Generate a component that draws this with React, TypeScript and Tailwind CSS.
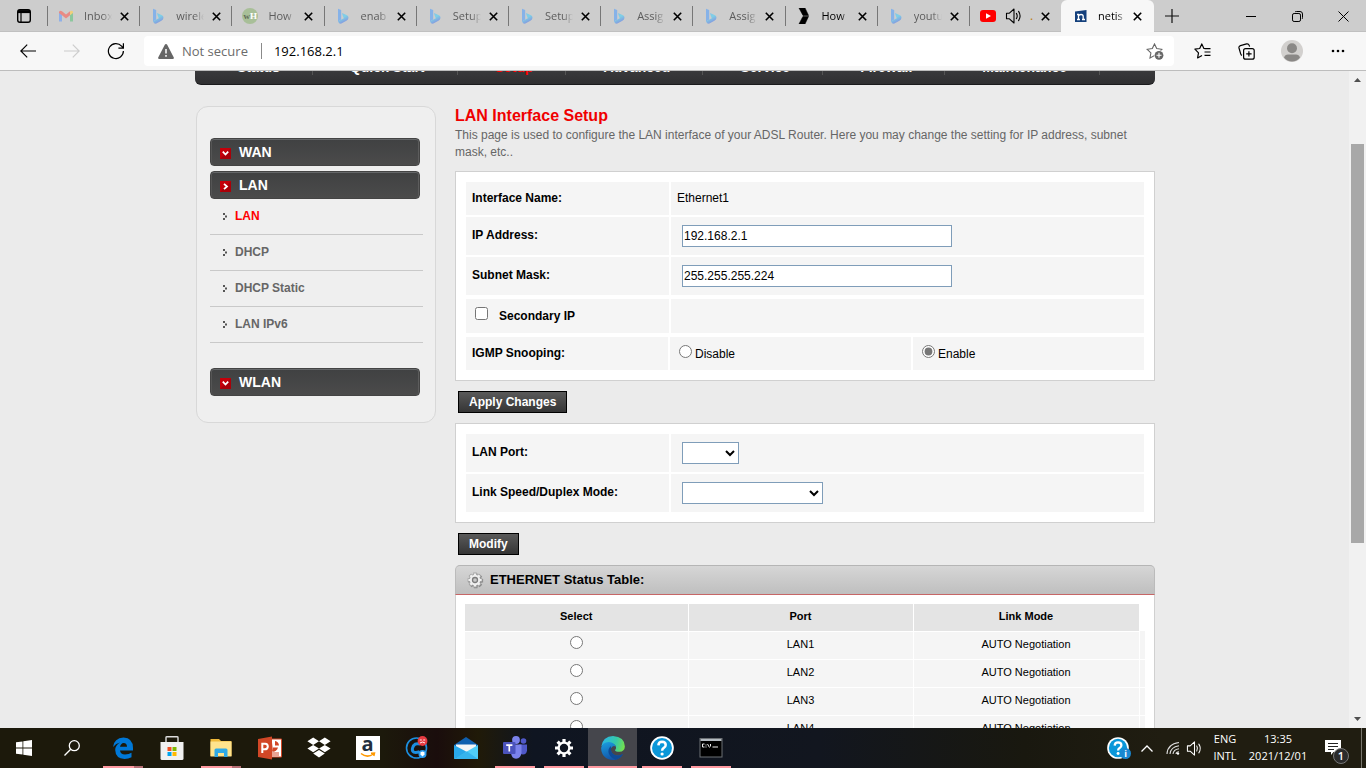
import React from "react";

const UI = "font-['Open_Sans','Noto_Sans',sans-serif]";

/* ---------- favicons ---------- */

function BingIcon() {
  return (
    <svg viewBox="0 0 12 16" className="h-4 w-3" aria-hidden="true">
      <defs>
        <linearGradient id="bing" x1="0" y1="0" x2="0.5" y2="1">
          <stop offset="0" stopColor="#7fc0ea" />
          <stop offset="0.5" stopColor="#7fd0e6" />
          <stop offset="1" stopColor="#8494de" />
        </linearGradient>
      </defs>
      <path d="M1 .8 4.2 2V11.600L1 13.4Z" fill="#86b2e8" />
      <path d="M5 5 10 7.3Q11.5 8 11.5 9.8 11.4 11.6 9.4 12.800L4.400 15.6Q2 16.200 1 13.2L6.800 10.2 5.8 8Z" fill="url(#bing)" />
    </svg>
  );
}

function GmailIcon() {
  return (
    <svg viewBox="0 0 16 12" className="h-3 w-4" aria-hidden="true">
      <path d="M1 1.5V11.5H4V5Z" fill="#8fb0e8" />
      <path d="M15 1.5V11.5H12V5Z" fill="#8cc79d" />
      <path d="M1 2Q2-.2 4 1.2L8 4.4 12 1.2V5.2L8 8.4 4 5.2 1 3Z" fill="#e98a84" />
      <path d="M12 1.2Q14.5-.2 15 2V3L12 5.2Z" fill="#f0cf7c" />
    </svg>
  );
}

function WikiHowIcon() {
  return (
    <span className="flex h-4 w-4 items-center justify-center rounded-full bg-[#a8bf98] font-['Liberation_Serif',serif] text-[9px] font-bold leading-none text-[#5d6b55]">
      w<span className="text-white">H</span>
    </span>
  );
}

function ArrowFavicon() {
  return (
    <svg viewBox="0 0 12 16" className="h-4 w-3" aria-hidden="true">
      <path d="M1 0H7L10.500 7.400H5ZM5 8.400H10.500L7 16H1L4.400 9.500Z" fill="#000" stroke="#000" strokeWidth=".6" />
    </svg>
  );
}

function YoutubeIcon() {
  return (
    <svg viewBox="0 0 16 12" className="h-3 w-4" aria-hidden="true">
      <rect width="16" height="12" rx="3" fill="#f00" />
      <path d="M6 3.2 11 6 6 8.8Z" fill="#fff" />
    </svg>
  );
}

function NetisIcon() {
  return (
    <svg viewBox="0 0 14 14" className="h-3.5 w-3.5" aria-hidden="true">
      <path d="M1 2.500 12.500 1V13H1Z" fill="#14407c" />
      <path d="M3 5.500H4.500V10.500M3 10.500H6M4.500 7Q5.200 5.500 7 5.500 9.200 5.500 9.200 7.500V10.500M8 10.500H11" fill="none" stroke="#fff" strokeWidth="1.300" />
    </svg>
  );
}

function SpeakerIcon({ className }: { className: string }) {
  return (
    <svg viewBox="0 0 18 18" className={className} fill="none" stroke="currentColor" strokeWidth="1.1" aria-hidden="true">
      <path d="M1.5 6.2H4.4L9 2V16L4.4 11.8H1.5Z" strokeLinejoin="round" />
      <path d="M11.4 6.4Q13 9 11.4 11.6M13.6 4.4Q16.6 9 13.6 13.6" strokeLinecap="round" />
    </svg>
  );
}

function CloseIcon() {
  return (
    <svg viewBox="0 0 9 9" className="h-[9px] w-[9px]" aria-hidden="true">
      <path d="M.8.8 8.2 8.2M8.2.8.8 8.2" stroke="#000" strokeWidth="1.6" />
    </svg>
  );
}

/* ---------- browser window ---------- */

type Tab = { title: string; icon: React.ReactNode; dark?: boolean; sound?: boolean };

const tabs: Tab[] = [
  { title: "Inbox", icon: <GmailIcon /> },
  { title: "wirele", icon: <BingIcon /> },
  { title: "How", icon: <WikiHowIcon /> },
  { title: "enab", icon: <BingIcon /> },
  { title: "Setup", icon: <BingIcon /> },
  { title: "Setup", icon: <BingIcon /> },
  { title: "Assig", icon: <BingIcon /> },
  { title: "Assig", icon: <BingIcon /> },
  { title: "How", icon: <ArrowFavicon />, dark: true },
  { title: "youtu", icon: <BingIcon /> },
  { title: ".", icon: <YoutubeIcon />, sound: true },
];

const fade = "[mask-image:linear-gradient(to_right,black_65%,transparent)]";

function TabItem({ tab }: { tab: Tab }) {
  return (
    <div className="flex min-w-0 flex-1 items-center">
      <span className="h-5 w-px shrink-0 bg-[#777]" />
      <span className="ml-[10px] flex w-4 shrink-0 justify-center">{tab.icon}</span>
      {tab.sound ? (
        <>
          <SpeakerIcon className="ml-[9px] h-[18px] w-[18px] shrink-0 text-black" />
          <span className="ml-[7px] w-[10px] text-[12px] leading-4 text-[#c07a10]">{tab.title}</span>
        </>
      ) : (
        <span
          className={`ml-[10px] w-7 overflow-hidden whitespace-nowrap text-[11px] leading-4 ${fade} ${
            tab.dark ? "text-black" : "text-[#5c5c5c]"
          }`}
        >
          {tab.title}
        </span>
      )}
      <button type="button" aria-label="Close tab" className={`shrink-0 ${tab.sound ? "ml-[1px]" : "ml-[8px]"}`}>
        <CloseIcon />
      </button>
    </div>
  );
}

function TabStrip() {
  return (
    <div className="flex h-8 shrink-0 items-stretch bg-[#cdcdcd] shadow-[inset_0_-1px_0_#c0c0c0]">
      <button type="button" aria-label="Tab actions" className="flex w-[47px] shrink-0 items-center justify-center">
        <svg viewBox="0 0 16 16" className="h-4 w-4" fill="none" stroke="#000" aria-hidden="true">
          <rect x="1.7" y="1.7" width="12.6" height="12.6" rx="2.2" strokeWidth="1.4" />
          <path d="M2 3.6H14" strokeWidth="3" />
          <path d="M5 4V14" strokeWidth="1.2" />
        </svg>
      </button>
      <div className="flex max-w-[1014px] flex-1">
        {tabs.map((tab, i) => (
          <TabItem key={i} tab={tab} />
        ))}
      </div>
      <div className="flex w-[93px] shrink-0 items-center rounded-t-md bg-[#f7f7f7]">
        <span className="ml-[13px] flex">
          <NetisIcon />
        </span>
        <span className={`ml-[10px] w-7 whitespace-nowrap text-[11px] leading-4 text-black ${fade}`}>netis</span>
        <button type="button" aria-label="Close tab" className="ml-[7px]">
          <CloseIcon />
        </button>
      </div>
      <button type="button" aria-label="New tab" className="flex w-9 items-center justify-center">
        <svg viewBox="0 0 14 14" className="h-3.5 w-3.5" aria-hidden="true">
          <path d="M7 0V14M0 7H14" stroke="#111" strokeWidth="1.2" />
        </svg>
      </button>
      <div className="ml-auto flex">
        <button type="button" aria-label="Minimize" className="flex w-[46px] items-center justify-center">
          <span className="h-px w-[10px] bg-black" />
        </button>
        <button type="button" aria-label="Restore" className="flex w-[46px] items-center justify-center">
          <svg viewBox="0 0 11 11" className="h-[11px] w-[11px]" fill="none" stroke="#000" aria-hidden="true">
            <rect x=".5" y="2.5" width="8" height="8" rx="1.6" />
            <path d="M3 .9Q3.4.5 4.4.5H8Q10.5.5 10.5 3V6.6Q10.5 7.6 10 8" />
          </svg>
        </button>
        <button type="button" aria-label="Close window" className="flex w-[46px] items-center justify-center">
          <svg viewBox="0 0 11 11" className="h-[11px] w-[11px]" aria-hidden="true">
            <path d="M.5.5 10.5 10.5M10.5.5.5 10.5" stroke="#000" />
          </svg>
        </button>
      </div>
    </div>
  );
}

function ToolbarButton({ label, wide, children }: { label: string; wide?: boolean; children: React.ReactNode }) {
  return (
    <button type="button" aria-label={label} className={`flex h-full items-center justify-center ${wide ? "w-12" : "w-11"}`}>
      {children}
    </button>
  );
}

function Toolbar() {
  return (
    <div className="flex h-[39px] shrink-0 items-center border-b border-[#bdbdbd] bg-[#f7f7f7] px-[6px]">
      <ToolbarButton label="Back">
        <svg viewBox="0 0 16 14" className="h-3.5 w-4" fill="none" stroke="#000" strokeWidth="1.2" aria-hidden="true">
          <path d="M.8 7H16M7.2.6.8 7 7.2 13.4" />
        </svg>
      </ToolbarButton>
      <ToolbarButton label="Forward">
        <svg viewBox="0 0 16 14" className="h-3.5 w-4" fill="none" stroke="#ccc" strokeWidth="1.2" aria-hidden="true">
          <path d="M0 7H15.2M8.8.6 15.2 7 8.8 13.4" />
        </svg>
      </ToolbarButton>
      <ToolbarButton label="Refresh">
        <svg viewBox="0 0 18 18" className="h-[18px] w-[18px]" fill="none" stroke="#000" strokeWidth="1.2" aria-hidden="true">
          <path d="M16.4 9A7.5 7.5 0 1 1 14.6 4.2L16.2 6M16.4 1.2V6.2H11.4" />
        </svg>
      </ToolbarButton>
      <div className="ml-[6px] mr-[6px] flex h-[30px] flex-1 items-center rounded bg-white px-[14px]">
        <svg viewBox="0 0 16 15" className="h-[15px] w-4 shrink-0" aria-hidden="true">
          <path d="M8 0Q8.8 0 9.2.8L15.8 13.4Q16.2 15 14.8 15H1.2Q-.2 15 .2 13.4L6.8.8Q7.2 0 8 0Z" fill="#666" />
          <path d="M8 5V9.6M8 11V12.8" stroke="#fff" strokeWidth="1.5" />
        </svg>
        <span className="ml-2 text-[13px] leading-5 text-[#6b6b6b]">Not secure</span>
        <span className="ml-[13px] h-4 w-px bg-[#8a8a8a]" />
        <input
          aria-label="Address"
          defaultValue="192.168.2.1"
          className="ml-[12px] min-w-0 flex-1 bg-transparent text-[13px] leading-5 text-black outline-none"
        />
        <button type="button" aria-label="Add to favorites">
          <svg viewBox="0 0 18 17" className="-mr-1 h-[17px] w-[18px]" aria-hidden="true">
            <path d="M8.5 1 10.7 5.6 15.8 6.3 12.2 9.9 13 14.9 8.5 12.5 4 14.9 4.9 9.9 1.2 6.3 6.3 5.6Z" fill="none" stroke="#666" strokeWidth="1.1" />
            <circle cx="13" cy="12.3" r="5" fill="#fff" />
            <circle cx="13" cy="12.3" r="4.4" fill="#666" />
            <path d="M13 9.8V14.8M10.5 12.3H15.5" stroke="#fff" strokeWidth="1.1" />
          </svg>
        </button>
      </div>
      <ToolbarButton label="Favorites">
        <svg viewBox="0 0 17 16" className="h-4 w-[17px]" fill="none" stroke="#000" strokeWidth="1.2" aria-hidden="true">
          <path d="M12 5.500H9.9L7.8.9 5.7 5.5.9 6.2 4.5 9.8 3.6 14.9 8 12.4" strokeLinejoin="round" />
          <path d="M10.5 5.6H16.5M10.5 9H16.5M10.5 12.4H16.5" />
        </svg>
      </ToolbarButton>
      <ToolbarButton label="Collections">
        <svg viewBox="0 0 17 17" className="h-[17px] w-[17px]" fill="none" stroke="#000" strokeWidth="1.2" aria-hidden="true">
          <rect x="5.6" y="5.6" width="10.6" height="10.6" rx="2" />
          <path d="M10.9 8.2V13.6M8.2 10.9H13.6M4 12.4Q3 12 2.6 10.6L1 5Q.6 3.2 2.4 2.6L8.6.9Q10.6.6 11.2 2.4L11.6 3.6" />
        </svg>
      </ToolbarButton>
      <ToolbarButton label="Profile" wide>
        <svg viewBox="0 0 22 22" className="h-[22px] w-[22px]" aria-hidden="true">
          <circle cx="11" cy="11" r="11" fill="#d2d0ce" />
          <circle cx="11" cy="8.2" r="5" fill="#8a8886" />
          <path d="M3 17.5Q4 14.5 7 14.5H15Q18 14.5 19 17.5 16 21.4 11 21.6 6 21.4 3 17.5Z" fill="#8a8886" />
        </svg>
      </ToolbarButton>
      <ToolbarButton label="Settings and more">
        <svg viewBox="0 0 14 4" className="h-1 w-3.5" aria-hidden="true">
          <circle cx="2" cy="2" r="1.3" />
          <circle cx="7" cy="2" r="1.3" />
          <circle cx="12" cy="2" r="1.3" />
        </svg>
      </ToolbarButton>
    </div>
  );
}

/* ---------- router page ---------- */

const menu = ["Status", "Quick Start", "Setup", "Advanced", "Service", "Firewall", "Maintenance"];

function MainMenu() {
  return (
    <nav className="-mt-[23px] flex h-[37px] items-start rounded-b-md border-b border-[#1a1a1c] bg-linear-to-b from-[#4c4c4e] to-[#2f2f31] pl-[5px]">
      {menu.map((item) => (
        <a
          key={item}
          href="#"
          className={`flex h-[27px] items-end border-r border-[#555] pl-[37px] pr-[32px] text-[14px] font-bold leading-4 ${
            item === "Setup" ? "text-[#f00]" : "text-white"
          }`}
        >
          {item}
        </a>
      ))}
    </nav>
  );
}

function SideButton({ label, open }: { label: string; open?: boolean }) {
  return (
    <button
      type="button"
      className="flex h-7 w-[210px] items-center rounded-[4px] border border-[#444] bg-linear-to-b from-[#404142] to-[#4b4b4b] pl-[9px] text-left text-[14px] font-bold text-white shadow-[inset_0_1px_0_#66686a,inset_1px_0_0_#555,inset_-1px_0_0_#5c5c5c]"
    >
      <svg viewBox="0 0 11 11" className="mt-0.5 h-[11px] w-[11px]" aria-hidden="true">
        <rect width="11" height="11" fill="#a90008" />
        <path d="M0 0H11L0 11Z" fill="#c4000a" />
        <path d={open ? "M4 2.800 7 5.500 4 8.200" : "M2.800 3.700 5.500 6.500 8.200 3.700"} fill="none" stroke="#fff" strokeWidth="1.800" />
      </svg>
      <span className="ml-[8px]">{label}</span>
    </button>
  );
}

const subItems = ["LAN", "DHCP", "DHCP Static", "LAN IPv6"];

function Sidebar() {
  return (
    <aside className="ml-px w-[240px] shrink-0 self-start rounded-xl border border-[#d8d8d8] bg-[#efefef] pb-[26px] pl-[13px] pr-[12px] pt-[31px]">
      <SideButton label="WAN" />
      <div className="mt-[5px]">
        <SideButton label="LAN" open />
      </div>
      <ul className="w-[213px]">
        {subItems.map((item) => (
          <li key={item} className="flex h-9 items-center border-b border-[#c9c9c9] pb-[2px] pl-[12px]">
            <svg viewBox="0 0 5 7" className="mt-0.5 h-[7px] w-[5px]" fill="#555" aria-hidden="true">
              <path d="M1 0H3V2H1ZM3 2.500H5V4.500H3ZM1 5H3V7H1Z" />
            </svg>
            <a href="#" className={`ml-[8px] text-[12px] font-bold leading-4 ${item === "LAN" ? "text-[#f00]" : "text-[#666]"}`}>
              {item}
            </a>
          </li>
        ))}
      </ul>
      <div className="mt-[25px]">
        <SideButton label="WLAN" />
      </div>
    </aside>
  );
}

const cell = "flex items-center bg-[#f5f5f5] pl-[6px]";
const field = "ml-[5px] h-[22px] border border-[#7f9db9] bg-white text-[12px] text-black";

function Row({ label, htmlFor, tall, children }: { label: string; htmlFor?: string; tall?: boolean; children: React.ReactNode }) {
  return (
    <div className={`grid grid-cols-[203px_1fr] gap-x-[2px] ${tall ? "h-[38px]" : "h-[33px]"}`}>
      <label htmlFor={htmlFor} className={`${cell} pb-[2px] font-bold`}>
        {label}
      </label>
      <div className={`${cell} ${tall ? "" : "pb-[2px]"}`}>{children}</div>
    </div>
  );
}

function ActionButton({ children }: { children: React.ReactNode }) {
  return (
    <button
      type="button"
      className="ml-[3px] mt-[10px] block h-[22px] border border-black bg-linear-to-b from-[#5a5a5a] to-[#353535] px-[10px] text-[12px] font-bold leading-5 text-white"
    >
      {children}
    </button>
  );
}

function GearIcon() {
  const teeth = "M8 .6V15.400M.6 8H15.400M2.800 2.800 13.200 13.200M13.200 2.800 2.800 13.200";
  return (
    <svg viewBox="0 0 17 17" className="h-[17px] w-[17px]" fill="none" aria-hidden="true">
      <g transform="translate(.7 .8)">
        <path d={teeth} stroke="#858585" strokeWidth="3.600" />
        <circle cx="8" cy="8" r="6" fill="#858585" />
      </g>
      <path d={teeth} stroke="#a5a5a5" strokeWidth="3.600" />
      <circle cx="8" cy="8" r="6" fill="#a5a5a5" />
      <path d="M8 1.400V14.600M1.400 8H14.600M3.400 3.400 12.600 12.600M12.600 3.400 3.400 12.600" stroke="#f0f0f0" strokeWidth="2.200" />
      <circle cx="8" cy="8" r="5.200" fill="#efefef" />
      <circle cx="8" cy="8" r="2.500" fill="#c9c9c9" stroke="#7c7c7c" strokeWidth="1.300" />
    </svg>
  );
}

const ports = ["LAN1", "LAN2", "LAN3", "LAN4"];

function StatusTable() {
  return (
    <section className="mt-[10px]">
      <h2 className="flex h-[30px] items-center rounded-t-[5px] border border-b-[#c66666] border-l-[#bbb] border-r-[#bbb] border-t-[#b5b5b5] bg-linear-to-b from-[#d6d6d6] to-[#bfbfbf] pl-[11px] text-[13px] font-bold">
        <GearIcon />
        <span className="ml-[6px]">ETHERNET Status Table:</span>
      </h2>
      <div className="border-x border-[#d0d0d0] bg-white px-[9px] pb-4 pt-[9px]">
        <table className="w-full table-fixed border-collapse text-center text-[11px]">
          <colgroup>
            <col className="w-[223px]" />
            <col className="w-[225px]" />
            <col />
            <col className="w-[6px]" />
          </colgroup>
          <thead>
            <tr className="h-[27px]">
              {["Select", "Port", "Link Mode"].map((h) => (
                <th key={h} scope="col" className="border-b border-r border-white bg-[#e4e4e4] pb-[2px] font-bold">
                  {h}
                </th>
              ))}
              <td />
            </tr>
          </thead>
          <tbody>
            {ports.map((port) => (
              <tr key={port} className="h-7 bg-[#f5f5f5]">
                <td className="border-b border-r border-white">
                  <input type="radio" name="port" aria-label={port} className="mx-auto mb-[5px] block h-[13px] w-[13px]" />
                </td>
                <td className="border-b border-r border-white pb-px">{port}</td>
                <td className="border-b border-r border-white pb-px">AUTO Negotiation</td>
                <td className="border-b border-white" />
              </tr>
            ))}
          </tbody>
        </table>
      </div>
    </section>
  );
}

function LanForm() {
  return (
    <main className="ml-[19px] min-w-0 flex-1 text-[12px] text-black">
      <h1 className="text-[16px] font-bold leading-5 text-[#f00000]">LAN Interface Setup</h1>
      <p className="mt-px leading-[17px] text-[#666]">
        This page is used to configure the LAN interface of your ADSL Router. Here you may change the setting for IP address, subnet
        mask, etc..
      </p>
      <div className="mt-[10px] flex flex-col gap-[2px] border border-[#d0d0d0] bg-white p-[10px]">
        <Row label="Interface Name:">Ethernet1</Row>
        <Row label="IP Address:" htmlFor="ip" tall>
          <input id="ip" defaultValue="192.168.2.1" className={`${field} w-[270px] px-[1px]`} />
        </Row>
        <Row label="Subnet Mask:" htmlFor="mask" tall>
          <input id="mask" defaultValue="255.255.255.224" className={`${field} w-[270px] px-[1px]`} />
        </Row>
        <div className="my-[2px] grid h-[34px] grid-cols-[203px_1fr] gap-x-[2px]">
          <div className={`${cell} pl-[9px]`}>
            <input id="secondary" type="checkbox" className="mb-[5px] h-[13px] w-[13px]" />
            <label htmlFor="secondary" className="ml-[11px] font-bold">
              Secondary IP
            </label>
          </div>
          <div className={cell} />
        </div>
        <div className="grid h-[33px] grid-cols-[202px_241px_1fr] gap-x-[2px]">
          <div className={`${cell} pb-[2px] font-bold`}>IGMP Snooping:</div>
          <div className={`${cell} pl-[9px]`}>
            <input id="igmp-off" type="radio" name="igmp" className="mb-1 h-[13px] w-[13px]" />
            <label htmlFor="igmp-off" className="ml-[3px]">
              Disable
            </label>
          </div>
          <div className={`${cell} pl-[9px]`}>
            <input id="igmp-on" type="radio" name="igmp" defaultChecked className="mb-1 h-[13px] w-[13px] accent-[#767676]" />
            <label htmlFor="igmp-on" className="ml-[3px]">
              Enable
            </label>
          </div>
        </div>
      </div>
      <ActionButton>Apply Changes</ActionButton>
      <div className="mt-[10px] flex flex-col gap-[2px] border border-[#d0d0d0] bg-white p-[10px]">
        <Row label="LAN Port:" htmlFor="lan-port" tall>
          <select id="lan-port" defaultValue="" className={`${field} w-[57px]`}>
            <option value=""></option>
          </select>
        </Row>
        <Row label="Link Speed/Duplex Mode:" htmlFor="link-mode" tall>
          <select id="link-mode" defaultValue="" className={`${field} w-[141px]`}>
            <option value=""></option>
          </select>
        </Row>
      </div>
      <ActionButton>Modify</ActionButton>
      <StatusTable />
    </main>
  );
}

function Scrollbar() {
  return (
    <div className="flex w-[17px] shrink-0 flex-col items-center bg-[#f1f1f1]" aria-hidden="true">
      <svg viewBox="0 0 7 4" className="mt-[7px] h-1 w-[7px]" fill="#505050">
        <path d="M3.500 0 7 4H0Z" />
      </svg>
      <div className="flex w-[13px] flex-1 flex-col py-[6px]">
        <div className="grow-[9]" />
        <div className="grow-[64] bg-[#a8a8a8]" />
        <div className="grow-[27]" />
      </div>
      <svg viewBox="0 0 7 4" className="mb-[7px] h-1 w-[7px]" fill="#505050">
        <path d="M0 0H7L3.500 4Z" />
      </svg>
    </div>
  );
}

/* ---------- taskbar ---------- */

function HelpIcon({ className }: { className: string }) {
  return (
    <svg viewBox="0 0 24 24" className={className} aria-hidden="true">
      <circle cx="12" cy="12" r="11.8" fill="#fff" />
      <circle cx="12" cy="12" r="10" fill="#0a97d9" />
      <path d="M8.4 9.4Q8.500 5.800 12.100 5.800 15.700 5.900 15.700 9 15.700 10.800 13.800 11.900 12.100 13 12.100 14.800" fill="none" stroke="#fff" strokeWidth="2.500" />
      <circle cx="12.100" cy="18" r="1.600" fill="#fff" />
    </svg>
  );
}

const glyph = "h-6 w-6";

const apps: { name: string; icon: React.ReactNode; open?: "one" | "many"; active?: boolean }[] = [
  {
    name: "Edge Legacy",
    open: "many",
    icon: (
      <svg viewBox="0 0 24 24" className={glyph} aria-hidden="true">
        <path
          d="M2 11Q3.200 2 12.500 1.500 22 2 22 12V14.500H9Q9.500 18.500 14 18.600 18 18.600 20.500 16.800V21.200Q17.500 23 13.500 23 4.500 22.500 4.200 14 4.400 9 9 6.500 5 7.300 2 11ZM9 10.800H16Q16 7 12.600 6.900 9.800 7.200 9 10.800Z"
          fill="#0078d7"
        />
      </svg>
    ),
  },
  {
    name: "Microsoft Store",
    icon: (
      <svg viewBox="0 0 24 24" className={glyph} aria-hidden="true">
        <path d="M6 7V1.500Q6 .8 7 .8H17Q18 .8 18 1.500V7" fill="none" stroke="#ddd" strokeWidth="1.400" />
        <path d="M.5 6H23.500V22.500Q23.500 24 22 24H2Q.5 24 .5 22.500Z" fill="#f1f1f1" />
        <path d="M7.500 11H11.500V15H7.500Z" fill="#f25022" />
        <path d="M12.500 11H16.500V15H12.500Z" fill="#7fba00" />
        <path d="M7.500 16H11.500V20H7.500Z" fill="#00a4ef" />
        <path d="M12.500 16H16.500V20H12.500Z" fill="#ffb900" />
      </svg>
    ),
  },
  {
    name: "File Explorer",
    open: "many",
    icon: (
      <svg viewBox="0 0 24 24" className={glyph} aria-hidden="true">
        <path d="M1.500 3H10L12 5H22Q22.500 5 22.500 6V20H1.500Z" fill="#f0b93a" />
        <path d="M1.500 5.500H22.500V20.500H1.500Z" fill="#ffe38d" />
        <path d="M5.500 21V14Q5.500 12.500 7 12.500H17Q18.500 12.500 18.500 14V21H15V17H9V21Z" fill="#2fa9e6" />
      </svg>
    ),
  },
  {
    name: "PowerPoint",
    icon: (
      <svg viewBox="0 0 24 24" className={glyph} aria-hidden="true">
        <path d="M12 3H23.500V21H12Z" fill="#fff" stroke="#d24726" />
        <path d="M15 6.500V11.500H20A5 5 0 0 1 14 15.500M17 5A5 5 0 0 1 21 9.500H17Z" fill="#d24726" />
        <path d="M14 17H21M14 19H21" stroke="#d24726" />
        <path d="M0 3 14 .5V23.500L0 21Z" fill="#d24726" />
        <path d="M4.300 17V7.800H7.200Q9.800 8 9.800 10.600 9.600 13.300 6.800 13.300H4.500" fill="none" stroke="#fff" strokeWidth="2" />
      </svg>
    ),
  },
  {
    name: "Dropbox",
    icon: (
      <svg viewBox="0 0 24 24" className={glyph} fill="#fff" aria-hidden="true">
        <path d="M6.200 1.500 12 5.200 6.200 8.900.4 5.200ZM17.800 1.500 23.600 5.200 17.800 8.900 12 5.200ZM6.200 8.900 12 12.600 6.200 16.300.4 12.600ZM17.800 8.900 23.600 12.600 17.800 16.300 12 12.600ZM12 13.900 17.800 17.600 12 21.500 6.200 17.600Z" />
      </svg>
    ),
  },
  {
    name: "Amazon",
    icon: (
      <span className="relative flex h-6 w-6 justify-center bg-white font-['Open_Sans',sans-serif] text-[20px] font-bold leading-4 text-[#232f3e]">
        a
        <svg viewBox="0 0 16 6" className="absolute bottom-[2px] left-1 h-1.5 w-4" fill="none" stroke="#f90" strokeWidth="1.500" aria-hidden="true">
          <path d="M1 1.500Q7 6.500 13.500 2M11 1.200 14.500 1 13.800 4" />
        </svg>
      </span>
    ),
  },
  {
    name: "CCleaner",
    icon: (
      <svg viewBox="0 0 24 24" className={glyph} fill="none" aria-hidden="true">
        <circle cx="11.500" cy="12" r="10" stroke="#1c8fe0" strokeWidth="1.600" />
        <path d="M15.500 8.200Q9 6 7.400 12.500 6.600 18 14.500 15.800" stroke="#1c8fe0" strokeWidth="3" />
        <circle cx="17.500" cy="5" r="4.900" fill="#e63b42" />
        <path d="M14.800 4H16.800M18.200 4H20.200M15 7Q17.500 5 20 7" stroke="#fff" strokeWidth=".9" />
        <circle cx="17.500" cy="18" r="4" fill="#2b9cf0" />
        <path d="M17.500 15.500 19.500 16.300V18.500L17.500 20.500 15.500 18.500V16.300Z" fill="#fff" />
      </svg>
    ),
  },
  {
    name: "Mail",
    icon: (
      <svg viewBox="0 0 24 24" className={glyph} aria-hidden="true">
        <path d="M0 9 12 1 24 9V14H0Z" fill="#0f5fae" />
        <path d="M2 8.500H22V14L12 17 2 14Z" fill="#f5f5f5" />
        <path d="M0 9 13 16 0 23Z" fill="#29a8ea" />
        <path d="M24 9V23H0Z" fill="#50cdf7" />
        <path d="M0 23 13 15.500 24 23Z" fill="#35b4ee" />
      </svg>
    ),
  },
  {
    name: "Teams",
    open: "one",
    icon: (
      <svg viewBox="0 0 24 24" className={glyph} aria-hidden="true">
        <circle cx="20.500" cy="5" r="2.800" fill="#5059c9" />
        <path d="M16 8.500H24V14.500Q23.500 18.500 20 18.500 17 18.500 16 15Z" fill="#5059c9" />
        <circle cx="13" cy="4" r="3.900" fill="#7b83eb" />
        <path d="M8 8.500H18.500V16.500Q18 22.500 13 22.800 8.500 22.500 8 17Z" fill="#7b83eb" />
        <rect y="6" width="12.500" height="12" rx="1" fill="#4b53bc" />
        <path d="M3.200 9.200H9.400M6.300 9V15.400" stroke="#fff" strokeWidth="1.700" />
      </svg>
    ),
  },
  {
    name: "Settings",
    open: "one",
    icon: (
      <svg viewBox="0 0 24 24" className={glyph} fill="none" stroke="#fff" aria-hidden="true">
        <circle cx="12" cy="12" r="5.300" strokeWidth="2.200" />
        <path
          d="M12 3V6.500M12 17.500V21M3 12H6.500M17.500 12H21M5.600 5.600 8.100 8.100M15.900 15.900 18.400 18.400M18.400 5.600 15.900 8.100M8.100 15.900 5.600 18.400"
          strokeWidth="3.200"
        />
      </svg>
    ),
  },
  {
    name: "Microsoft Edge",
    open: "one",
    active: true,
    icon: (
      <svg viewBox="0 0 24 24" className={glyph} aria-hidden="true">
        <defs>
          <linearGradient id="edgeTop" x1="0" y1="0.300" x2="1" y2="0.500">
            <stop offset="0" stopColor="#2ab5e8" />
            <stop offset="0.600" stopColor="#35c9a8" />
            <stop offset="1" stopColor="#73e04f" />
          </linearGradient>
          <linearGradient id="edgeLow" x1="0" y1="0" x2="0.400" y2="1">
            <stop offset="0" stopColor="#1ba0e0" />
            <stop offset="1" stopColor="#1254a8" />
          </linearGradient>
        </defs>
        <path d="M.3 10.500Q2 .5 12 .1 23.500.8 23.900 10.500 23.600 15.600 18.500 15.800 14.400 15.800 14 14.200 15.500 12.800 15 10.800 13.800 7.500 9 7 3 7 .3 10.500Z" fill="url(#edgeTop)" />
        <path d="M.1 12Q1.500 5.900 8 6 13.500 6.600 15 10.800 11.800 8.600 9.900 12.600 9.200 18.500 16 19.600 19.400 19.800 22 17.900 18.500 24 12 24 .6 23.200.1 12Z" fill="url(#edgeLow)" />
        <path d="M9.900 10Q6.400 13.200 7.800 17.600 9.600 22 14.500 23.700 19.600 22.600 22 17.900 19 19.800 16 19.600 9.800 18.500 9.900 12.600Z" fill="#0f4b97" />
      </svg>
    ),
  },
  { name: "Get Help", open: "one", icon: <HelpIcon className={glyph} /> },
  {
    name: "Command Prompt",
    open: "one",
    icon: (
      <svg viewBox="0 0 24 20" className="h-5 w-6" aria-hidden="true">
        <rect x="1" y=".5" width="22" height="18.500" fill="#000" stroke="#6c7074" />
        <path d="M1.500 1H22.500V3H1.500Z" fill="#b4bbc1" />
        <path d="M5.500 6H3.500V9H5.500M7 6.500V7.500M7 8.500V9.500M8.500 6 10.500 9.500M11.500 6V8.500M13.500 9H19" fill="none" stroke="#eee" />
      </svg>
    ),
  },
];

function Taskbar() {
  return (
    <footer className="flex h-10 shrink-0 items-stretch bg-[linear-gradient(to_right,#1c190b_0%,#1c190b_28%,#1a0d0c_32%,#201a08_35%,#0f1521_39%,#12161f_60%,#19180f_75%,#201d11_85%,#201d11_100%)] text-white">
      <button type="button" aria-label="Start" className="flex w-12 items-center justify-center">
        <svg viewBox="0 0 16 16" className="h-4 w-4" fill="#fff" aria-hidden="true">
          <path d="M0 2.300 6.500 1.400V7.600H0ZM7.300 1.300 16 0V7.600H7.300ZM0 8.400H6.500V14.600L0 13.700ZM7.300 8.400H16V16L7.300 14.700Z" />
        </svg>
      </button>
      <button type="button" aria-label="Search" className="mr-[2px] flex w-12 items-center justify-center">
        <svg viewBox="0 0 16 16" className="h-4 w-4" fill="none" stroke="#fff" strokeWidth="1.300" aria-hidden="true">
          <circle cx="10.300" cy="5.700" r="5" />
          <path d="M6.700 9.300.5 15.500" />
        </svg>
      </button>
      {apps.map((app) => (
        <button
          key={app.name}
          type="button"
          aria-label={app.name}
          className={`relative flex w-[49px] items-center justify-center ${app.active ? "bg-[#45464c]" : ""}`}
        >
          {app.icon}
          {app.open && (
            <span className={`absolute bottom-0 flex h-0.5 justify-end bg-[#ff99a0] ${app.active ? "inset-x-0" : "left-[5px] right-1"}`}>
              {app.open === "many" && <span className="w-[9px] bg-[#b56e74]" />}
            </span>
          )}
        </button>
      ))}
      <div className={`ml-auto flex items-center text-[11px] ${UI}`}>
        <button type="button" aria-label="Help" className="relative">
          <HelpIcon className="h-[22px] w-[22px]" />
          <span className="absolute -right-[2px] bottom-0 flex h-[11px] w-[11px] items-center justify-center rounded-full bg-[#1a87d0] text-[9px] font-bold leading-none">
            i
          </span>
        </button>
        <button type="button" aria-label="Show hidden icons" className="ml-[12px]">
          <svg viewBox="0 0 12 7" className="h-[7px] w-3" fill="none" stroke="#fff" strokeWidth="1.300" aria-hidden="true">
            <path d="M.5 6.500 6 1 11.500 6.500" />
          </svg>
        </button>
        <svg viewBox="0 0 14 14" className="ml-[13px] h-3.5 w-3.5" fill="none" stroke="#ddd" strokeWidth="1.100" aria-hidden="true">
          <path d="M1 13Q1.500 3 13 1.500M4 13Q4.500 6 13 4.700M7 13Q7.500 8.500 13 7.800M10 13Q10.300 11 13 10.800" />
          <circle cx="12" cy="12.600" r="1.200" fill="#fff" stroke="none" />
        </svg>
        <SpeakerIcon className="ml-[6px] h-[17px] w-[17px]" />
        <div className="ml-[8px] w-7 pb-[2px] text-center leading-[17px]">
          <div>ENG</div>
          <div>INTL</div>
        </div>
        <div className="ml-[9px] w-[60px] pb-[2px] text-center leading-[17px]">
          <div>13:35</div>
          <div>2021/12/01</div>
        </div>
        <button type="button" aria-label="Notifications" className="relative ml-[17px] mt-[7px] h-6 w-6">
          <svg viewBox="0 0 24 24" className="h-6 w-6" aria-hidden="true">
            <path d="M0 0H16V12H8.500L6 15V12H0Z" fill="#fff" />
            <path d="M3 3.500H13M3 6.500H13M3 9.500H9" stroke="#222" />
          </svg>
          <span className="absolute bottom-0 right-0 flex h-4 w-4 items-center justify-center rounded-full border border-[#777] bg-[#2b2b2b] text-[11px] font-semibold leading-none">
            1
          </span>
        </button>
        <span className="ml-[12px] mr-1 h-10 w-px bg-[#77756c]" />
      </div>
    </footer>
  );
}

export default function App() {
  return (
    <div className="flex h-screen flex-col overflow-hidden">
      <header className={`shrink-0 ${UI}`}>
        <TabStrip />
        <Toolbar />
      </header>
      <div className="flex min-h-0 flex-1 bg-[#ebebeb]">
        <div className="min-w-0 flex-1 overflow-hidden pl-px font-['Liberation_Sans',Arial,sans-serif]">
          <div className="mx-auto max-w-[960px]">
            <MainMenu />
            <div className="mt-[21px] flex">
              <Sidebar />
              <LanForm />
            </div>
          </div>
        </div>
        <Scrollbar />
      </div>
      <Taskbar />
    </div>
  );
}
